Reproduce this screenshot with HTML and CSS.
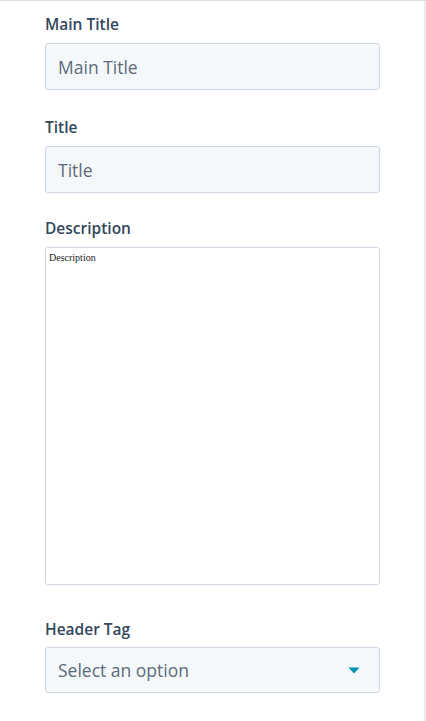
FILE: index.html
```html
<!DOCTYPE html>
<html lang="en">
<head>
<meta charset="utf-8">
<title>Module fields</title>
<link rel="stylesheet" href="styles.css">
</head>
<body>
<div class="page">
  <form class="panel">
    <div class="field">
      <label class="label" for="main-title">Main Title</label>
      <input class="input" id="main-title" type="text" placeholder="Main Title">
    </div>
    <div class="field">
      <label class="label" for="title">Title</label>
      <input class="input" id="title" type="text" placeholder="Title">
    </div>
    <div class="field field--desc">
      <label class="label" for="desc">Description</label>
      <textarea class="textarea" id="desc" placeholder="Description"></textarea>
    </div>
    <div class="field field--tag">
      <label class="label">Header Tag</label>
      <div class="select">
        <span class="select-text">Select an option</span>
        <svg class="caret" width="12" height="7" viewBox="0 0 12 7" aria-hidden="true"><path d="M0.5 0.5 H11.5 L6 6.5 Z" fill="#0091ae"/></svg>
      </div>
    </div>
  </form>
  <div class="scroll"></div>
</div>
</body>
</html>
```
FILE: styles.css
```css
html, body {
  margin: 0;
  padding: 0;
  background: #ffffff;
}

.page {
  display: flex;
  height: 721px;
  border-top: 1px solid #dcdfe3;
  box-sizing: border-box;
}

.panel {
  flex: 1;
  padding: 13px 44px 0 45px;
  font-family: "Open Sans", "Noto Sans", sans-serif;
}

.scroll {
  width: 1px;
  background: #f1f1f1;
  border-left: 1px solid #e8e8e8;
}

.field {
  margin-bottom: 27px;
}

.field--desc {
  margin-top: -2px;
  margin-bottom: 34px;
}

.field--tag .label {
  margin-bottom: 8px;
}

.label {
  display: block;
  font-size: 15.5px;
  font-weight: 600;
  line-height: 20px;
  color: #33475b;
  margin-bottom: 9px;
}

.input,
.select {
  display: flex;
  align-items: center;
  width: 100%;
  height: 47px;
  box-sizing: border-box;
  background: #f5f8fa;
  border: 1px solid #cbd6e2;
  border-radius: 3px;
  padding: 0 12px;
  font-family: "Open Sans", "Noto Sans", sans-serif;
  font-size: 17.5px;
  color: #5b6b7c;
  outline: none;
  margin: 0;
}

.input::placeholder {
  color: #5b6b7c;
  opacity: 1;
}

.select {
  height: 46px;
  justify-content: space-between;
  padding-right: 19px;
}

.caret {
  display: block;
}

.textarea {
  display: block;
  width: 100%;
  height: 338px;
  box-sizing: border-box;
  margin: 0;
  padding: 3px 3px;
  border: 1px solid #cbd6e2;
  border-radius: 3px;
  background: #ffffff;
  font-family: "Liberation Serif", "Times New Roman", serif;
  font-size: 10px;
  line-height: 13px;
  color: #222222;
  resize: none;
  outline: none;
}

.textarea::placeholder {
  color: #222222;
  opacity: 1;
}
```
